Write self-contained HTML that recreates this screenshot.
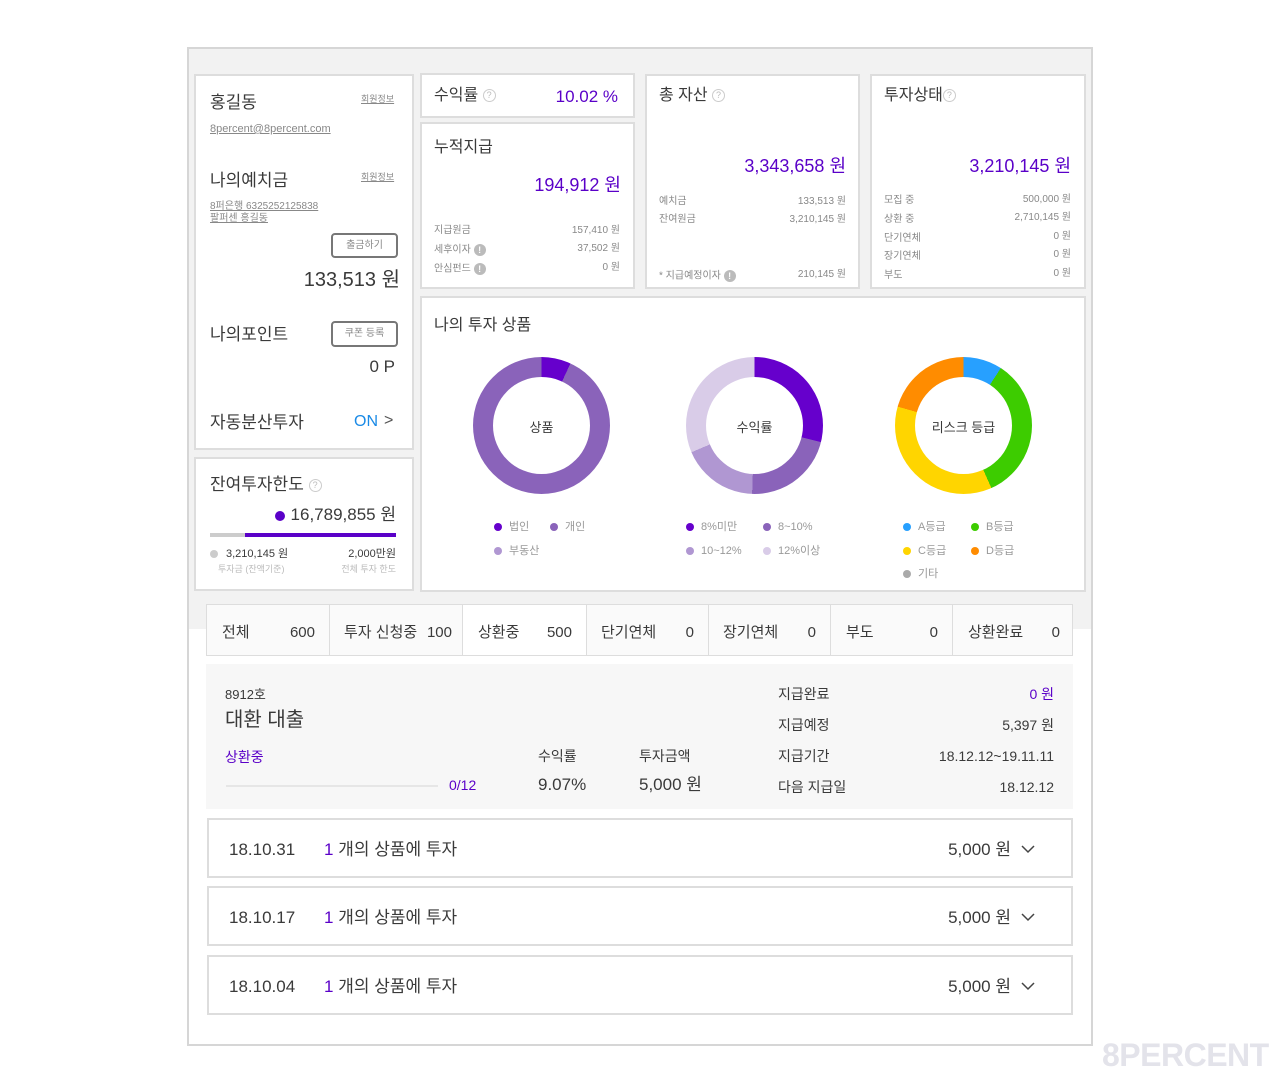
<!DOCTYPE html>
<html><head><meta charset="utf-8"><style>
*{margin:0;padding:0;box-sizing:border-box}
body{width:1280px;height:1087px;background:#fff;position:relative;font-family:"Liberation Sans","Noto Sans CJK KR",sans-serif;color:#3a3a3a;overflow:hidden}
.a{position:absolute;white-space:nowrap;line-height:1;padding-top:2px}
.box{position:absolute;background:#fff;border:2px solid #ddd}
.p{color:#5a00c8}
.g{color:#888}
.s{font-size:10px;color:#888}
.q{display:inline-block;width:13px;height:13px;border:1px solid #ccc;border-radius:50%;font-size:9px;color:#bbb;text-align:center;line-height:11px;vertical-align:middle}
.i{display:inline-block;width:12px;height:12px;border-radius:50%;background:#bbb;color:#fff;font-size:9px;text-align:center;line-height:12px;vertical-align:middle;font-weight:bold}
.btn{position:absolute;border:2px solid #777;border-radius:4px;font-size:10px;color:#888;text-align:center;background:#fff}
.dot{display:inline-block;width:8px;height:8px;border-radius:50%;margin-right:7px;vertical-align:middle}
.lg{font-size:11px;color:#999}
.donut{position:absolute;width:137px;height:137px;border-radius:50%}
.donut::after{content:"";position:absolute;left:20px;top:20px;width:97px;height:97px;border-radius:50%;background:#fff}
.dl{position:absolute;z-index:2;font-size:13px;width:137px;text-align:center;line-height:1;padding-top:2px}
.tab{position:absolute;top:604px;height:52px;border:1px solid #ddd;background:#fafafa;font-size:15px}
.row{position:absolute;left:207px;width:866px;height:60px;border:2px solid #ddd;background:#fff}
</style></head><body>
<div style="position:absolute;left:187px;top:47px;width:906px;height:999px;border:2px solid #d6d6d6;background:#fff"></div>
<div style="position:absolute;left:189px;top:49px;width:902px;height:580px;background:#f2f2f2"></div>

<div class="box" style="left:194px;top:74px;width:220px;height:376px"></div>
<div class="a" style="left:210px;top:92px;font-size:17px">홍길동</div>
<div class="a g" style="left:361px;top:93px;font-size:9px;text-decoration:underline">회원정보</div>
<div class="a g" style="left:210px;top:122px;font-size:11px;text-decoration:underline">8percent@8percent.com</div>
<div class="a" style="left:210px;top:170px;font-size:17px">나의예치금</div>
<div class="a g" style="left:361px;top:171px;font-size:9px;text-decoration:underline">회원정보</div>
<div class="a g" style="left:210px;top:199px;font-size:10px;text-decoration:underline;line-height:12px">8퍼은행 6325252125838<br>팔퍼센 홍길동</div>
<div class="btn" style="left:331px;top:233px;width:67px;height:25px;line-height:21px">출금하기</div>
<div class="a" style="right:880px;top:268px;font-size:20px">133,513 원</div>
<div class="a" style="left:210px;top:324px;font-size:17px">나의포인트</div>
<div class="btn" style="left:331px;top:321px;width:67px;height:26px;line-height:22px">쿠폰 등록</div>
<div class="a" style="right:885px;top:356px;font-size:17px">0 P</div>
<div class="a" style="left:210px;top:412px;font-size:17px">자동분산투자</div>
<div class="a" style="left:354px;top:412px;font-size:16px;color:#1a8ae6">ON</div>
<div class="a" style="left:384px;top:411px;font-size:16px;color:#555">&gt;</div>

<div class="box" style="left:194px;top:457px;width:220px;height:134px"></div>
<div class="a" style="left:210px;top:474px;font-size:17px">잔여투자한도 <span class="q">?</span></div>
<div class="a" style="right:884px;top:504px;font-size:17px"><span class="dot" style="background:#5a00c8;width:10px;height:10px;margin-right:6px"></span>16,789,855 원</div>
<div style="position:absolute;left:210px;top:533px;width:186px;height:4px;background:#5a00c8"></div>
<div style="position:absolute;left:210px;top:533px;width:35px;height:4px;background:#ccc"></div>
<div class="a" style="left:210px;top:547px;font-size:11px"><span class="dot" style="background:#ccc;margin-right:8px"></span>3,210,145 원</div>
<div class="a" style="right:884px;top:547px;font-size:11px">2,000만원</div>
<div class="a" style="left:218px;top:563px;font-size:9px;color:#bbb">투자금 (잔액기준)</div>
<div class="a" style="right:884px;top:563px;font-size:9px;color:#bbb">전체 투자 한도</div>

<div class="box" style="left:420px;top:73px;width:215px;height:45px"></div>
<div class="a" style="left:434px;top:86px;font-size:16px">수익률 <span class="q">?</span></div>
<div class="a p" style="right:662px;top:86px;font-size:17px">10.02 %</div>
<div class="box" style="left:420px;top:122px;width:215px;height:167px"></div>
<div class="a" style="left:434px;top:138px;font-size:16px">누적지급</div>
<div class="a p" style="right:659px;top:174px;font-size:18px">194,912 원</div>
<div class="a s" style="left:434px;top:224px">지급원금</div><div class="a s" style="right:660px;top:224px">157,410 원</div>
<div class="a s" style="left:434px;top:242px">세후이자 <span class="i">!</span></div><div class="a s" style="right:660px;top:242px">37,502 원</div>
<div class="a s" style="left:434px;top:261px">안심펀드 <span class="i">!</span></div><div class="a s" style="right:660px;top:261px">0 원</div>
<div class="box" style="left:645px;top:74px;width:215px;height:215px"></div>
<div class="a" style="left:659px;top:86px;font-size:16px">총 자산 <span class="q">?</span></div>
<div class="a p" style="right:434px;top:155px;font-size:18px">3,343,658 원</div>
<div class="a s" style="left:659px;top:195px">예치금</div><div class="a s" style="right:434px;top:195px">133,513 원</div>
<div class="a s" style="left:659px;top:213px">잔여원금</div><div class="a s" style="right:434px;top:213px">3,210,145 원</div>
<div class="a s" style="left:659px;top:268px">* 지급예정이자 <span class="i">!</span></div><div class="a s" style="right:434px;top:268px">210,145 원</div>
<div class="box" style="left:870px;top:74px;width:216px;height:215px"></div>
<div class="a" style="left:884px;top:86px;font-size:16px">투자상태<span class="q">?</span></div>
<div class="a p" style="right:209px;top:155px;font-size:18px">3,210,145 원</div>
<div class="a s" style="left:884px;top:194px">모집 중</div><div class="a s" style="right:209px;top:193px">500,000 원</div>
<div class="a s" style="left:884px;top:213px">상환 중</div><div class="a s" style="right:209px;top:211px">2,710,145 원</div>
<div class="a s" style="left:884px;top:232px">단기연체</div><div class="a s" style="right:209px;top:230px">0 원</div>
<div class="a s" style="left:884px;top:250px">장기연체</div><div class="a s" style="right:209px;top:248px">0 원</div>
<div class="a s" style="left:884px;top:269px">부도</div><div class="a s" style="right:209px;top:267px">0 원</div>

<div class="box" style="left:420px;top:296px;width:666px;height:296px"></div>
<div class="a" style="left:434px;top:316px;font-size:16px">나의 투자 상품</div>
<div class="donut" style="left:473px;top:357px;background:conic-gradient(#6600cc 0 25deg,#8a63ba 25deg 360deg)"></div>
<div class="dl" style="left:473px;top:419px">상품</div>
<div class="donut" style="left:686px;top:357px;background:conic-gradient(#6600cc 0 104deg,#8a63ba 104deg 182deg,#b097d2 182deg 247deg,#d9cce8 247deg 360deg)"></div>
<div class="dl" style="left:686px;top:419px">수익률</div>
<div class="donut" style="left:895px;top:357px;background:conic-gradient(#27a0ff 0 33deg,#3dcc00 33deg 156deg,#ffd500 156deg 286deg,#ff8c00 286deg 360deg)"></div>
<div class="dl" style="left:895px;top:419px">리스크 등급</div>

<div class="a lg" style="left:494px;top:520px"><span class="dot" style="background:#6600cc"></span>법인</div>
<div class="a lg" style="left:550px;top:520px"><span class="dot" style="background:#8a63ba"></span>개인</div>
<div class="a lg" style="left:494px;top:544px"><span class="dot" style="background:#b097d2"></span>부동산</div>
<div class="a lg" style="left:686px;top:520px"><span class="dot" style="background:#6600cc"></span>8%미만</div>
<div class="a lg" style="left:763px;top:520px"><span class="dot" style="background:#8a63ba"></span>8~10%</div>
<div class="a lg" style="left:686px;top:544px"><span class="dot" style="background:#b097d2"></span>10~12%</div>
<div class="a lg" style="left:763px;top:544px"><span class="dot" style="background:#d9cce8"></span>12%이상</div>
<div class="a lg" style="left:903px;top:520px"><span class="dot" style="background:#27a0ff"></span>A등급</div>
<div class="a lg" style="left:971px;top:520px"><span class="dot" style="background:#3dcc00"></span>B등급</div>
<div class="a lg" style="left:903px;top:544px"><span class="dot" style="background:#ffd500"></span>C등급</div>
<div class="a lg" style="left:971px;top:544px"><span class="dot" style="background:#ff8c00"></span>D등급</div>
<div class="a lg" style="left:903px;top:567px"><span class="dot" style="background:#aaa"></span>기타</div>

<div class="tab" style="left:206px;width:124px"><span class="a" style="left:15px;top:18px">전체</span><span class="a" style="right:14px;top:18px">600</span></div>
<div class="tab" style="left:329px;width:134px"><span class="a" style="left:14px;top:18px">투자 신청중</span><span class="a" style="right:10px;top:18px">100</span></div>
<div class="tab" style="left:462px;width:125px;background:#fff"><span class="a" style="left:15px;top:18px">상환중</span><span class="a" style="right:14px;top:18px">500</span></div>
<div class="tab" style="left:586px;width:123px"><span class="a" style="left:14px;top:18px">단기연체</span><span class="a" style="right:14px;top:18px">0</span></div>
<div class="tab" style="left:708px;width:123px"><span class="a" style="left:14px;top:18px">장기연체</span><span class="a" style="right:14px;top:18px">0</span></div>
<div class="tab" style="left:830px;width:123px"><span class="a" style="left:15px;top:18px">부도</span><span class="a" style="right:14px;top:18px">0</span></div>
<div class="tab" style="left:952px;width:121px"><span class="a" style="left:15px;top:18px">상환완료</span><span class="a" style="right:12px;top:18px">0</span></div>

<div style="position:absolute;left:206px;top:664px;width:867px;height:145px;background:#f7f7f7"></div>
<div class="a" style="left:225px;top:686px;font-size:13px">8912호</div>
<div class="a" style="left:225px;top:708px;font-size:20px">대환 대출</div>
<div class="a p" style="left:225px;top:748px;font-size:14px">상환중</div>
<div style="position:absolute;left:226px;top:785px;width:212px;height:2px;background:#e6e6e6"></div>
<div class="a p" style="left:449px;top:776px;font-size:14px">0/12</div>
<div class="a" style="left:538px;top:747px;font-size:14px">수익률</div>
<div class="a" style="left:538px;top:774px;font-size:17px">9.07%</div>
<div class="a" style="left:639px;top:747px;font-size:14px">투자금액</div>
<div class="a" style="left:639px;top:774px;font-size:17px">5,000 원</div>
<div class="a" style="left:778px;top:685px;font-size:14px">지급완료</div><div class="a p" style="right:226px;top:685px;font-size:14px">0 원</div>
<div class="a" style="left:778px;top:716px;font-size:14px">지급예정</div><div class="a" style="right:226px;top:716px;font-size:14px">5,397 원</div>
<div class="a" style="left:778px;top:747px;font-size:14px">지급기간</div><div class="a" style="right:226px;top:747px;font-size:14px">18.12.12~19.11.11</div>
<div class="a" style="left:778px;top:778px;font-size:14px">다음 지급일</div><div class="a" style="right:226px;top:778px;font-size:14px">18.12.12</div>

<div class="row" style="top:818px"><span class="a" style="left:20px;top:19px;font-size:17px">18.10.31</span><span class="a" style="left:115px;top:19px;font-size:17px"><span class="p">1</span> 개의 상품에 투자</span><span class="a" style="right:60px;top:19px;font-size:17px">5,000 원</span><svg style="position:absolute;right:36px;top:24px" width="14" height="10"><path d="M1 2 L7 8 L13 2" fill="none" stroke="#444" stroke-width="1.5"/></svg></div>
<div class="row" style="top:886px"><span class="a" style="left:20px;top:19px;font-size:17px">18.10.17</span><span class="a" style="left:115px;top:19px;font-size:17px"><span class="p">1</span> 개의 상품에 투자</span><span class="a" style="right:60px;top:19px;font-size:17px">5,000 원</span><svg style="position:absolute;right:36px;top:24px" width="14" height="10"><path d="M1 2 L7 8 L13 2" fill="none" stroke="#444" stroke-width="1.5"/></svg></div>
<div class="row" style="top:955px"><span class="a" style="left:20px;top:19px;font-size:17px">18.10.04</span><span class="a" style="left:115px;top:19px;font-size:17px"><span class="p">1</span> 개의 상품에 투자</span><span class="a" style="right:60px;top:19px;font-size:17px">5,000 원</span><svg style="position:absolute;right:36px;top:24px" width="14" height="10"><path d="M1 2 L7 8 L13 2" fill="none" stroke="#444" stroke-width="1.5"/></svg></div>

<div class="a" style="left:1102px;top:1037px;font-size:32px;font-weight:bold;color:#e3e3ea;letter-spacing:-0.5px">8PERCENT</div>
</body></html>
